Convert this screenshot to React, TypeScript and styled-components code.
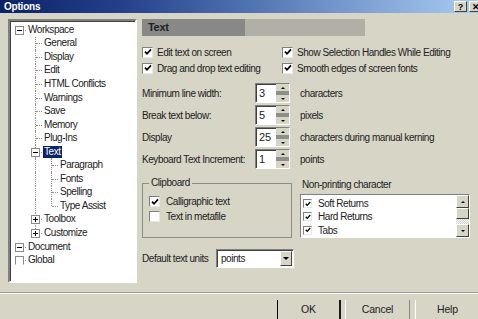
import styled, { createGlobalStyle } from "styled-components";

const FACE = "#d6d5c6";

const GlobalStyle = createGlobalStyle`
  html, body {
    margin: 0;
    padding: 0;
    background: ${FACE};
  }
`;

const Dialog = styled.div`
  width: 478px;
  height: 319px;
  overflow: hidden;
  background: ${FACE};
  display: flex;
  flex-direction: column;
  font-family: "Liberation Sans", Arial, sans-serif;
  font-size: 10px;
  letter-spacing: -0.45px;
  color: #222;
`;

const TitleBar = styled.div`
  height: 13px;
  flex: none;
  display: flex;
  justify-content: space-between;
  padding-left: 4px;
  background: linear-gradient(
    to right,
    #0c2266 0%,
    #24408a 25%,
    #4c6fae 50%,
    #7c9fd2 75%,
    #a8ccf2 100%
  );
`;

const TitleText = styled.span`
  color: #fff;
  font-weight: bold;
  font-size: 10px;
  letter-spacing: -0.2px;
  line-height: 13px;
`;

const TitleButtons = styled.div`
  display: flex;
  gap: 2px;
  margin: 1px -4px 0 0;
`;

const TitleButton = styled.div`
  width: 13px;
  height: 11px;
  box-sizing: border-box;
  background: ${FACE};
  border: 1px solid;
  border-color: #fff #404040 #404040 #fff;
  color: #000;
  font-weight: bold;
  font-size: 9px;
  letter-spacing: 0;
  display: flex;
  align-items: center;
  justify-content: center;
`;

const Main = styled.div`
  flex: none;
  height: 270px;
  box-sizing: border-box;
  display: flex;
  padding: 6px 0 0 8px;
`;

/* ---------- tree ---------- */

const Tree = styled.div`
  width: 129px;
  height: 264px;
  flex: none;
  box-sizing: border-box;
  background: #fff;
  border: 2px solid;
  border-color: #808080 #fff #fff #808080;
  box-shadow: inset 1px 1px #404040;
  padding: 2px 0 0 1px;
`;

const TreeRow = styled.div`
  height: 13.55px;
  display: flex;
  align-items: stretch;
`;

const Gutter = styled.span<{ $line: boolean }>`
  width: 16px;
  flex: none;
  position: relative;
  &::before {
    content: "";
    display: ${({ $line }) => ($line ? "block" : "none")};
    position: absolute;
    left: 8px;
    top: 0;
    bottom: 0;
    border-left: 1px dotted #909090;
  }
`;

const Joint = styled.span<{ $vline: "none" | "full" | "half" }>`
  width: 16px;
  flex: none;
  position: relative;
  &::before {
    content: "";
    display: ${({ $vline }) => ($vline === "none" ? "none" : "block")};
    position: absolute;
    left: 8px;
    top: 0;
    height: ${({ $vline }) => ($vline === "half" ? "50%" : "100%")};
    border-left: 1px dotted #909090;
  }
  &::after {
    content: "";
    position: absolute;
    left: 9px;
    right: 1px;
    top: 50%;
    border-top: 1px dotted #909090;
  }
`;

const ExpandBox = styled.span<{ $kind: "minus" | "plus" | "empty" }>`
  position: absolute;
  z-index: 1;
  left: 4px;
  top: calc(50% - 4px);
  width: 9px;
  height: 9px;
  box-sizing: border-box;
  background: #fff;
  border: 1px solid #8a8a8a;
  border-bottom-color: ${({ $kind }) => ($kind === "empty" ? "#fff" : "#8a8a8a")};
  &::before {
    content: "";
    display: ${({ $kind }) => ($kind === "empty" ? "none" : "block")};
    position: absolute;
    left: 1px;
    top: 3px;
    width: 5px;
    height: 1px;
    background: #000;
  }
  &::after {
    content: "";
    display: ${({ $kind }) => ($kind === "plus" ? "block" : "none")};
    position: absolute;
    left: 3px;
    top: 1px;
    width: 1px;
    height: 5px;
    background: #000;
  }
`;

const TreeLabel = styled.span<{ $selected?: boolean }>`
  align-self: center;
  padding: 0 1px;
  line-height: 12px;
  white-space: nowrap;
  background: ${({ $selected }) => ($selected ? "#0a246a" : "transparent")};
  color: ${({ $selected }) => ($selected ? "#fff" : "#222")};
`;

type Node = {
  label: string;
  level: number;
  box?: "minus" | "plus" | "empty";
  last?: boolean;
  selected?: boolean;
};

const nodes: Node[] = [
  { label: "Workspace", level: 0, box: "minus" },
  { label: "General", level: 1 },
  { label: "Display", level: 1 },
  { label: "Edit", level: 1 },
  { label: "HTML Conflicts", level: 1 },
  { label: "Warnings", level: 1 },
  { label: "Save", level: 1 },
  { label: "Memory", level: 1 },
  { label: "Plug-Ins", level: 1 },
  { label: "Text", level: 1, box: "minus", selected: true },
  { label: "Paragraph", level: 2 },
  { label: "Fonts", level: 2 },
  { label: "Spelling", level: 2 },
  { label: "Type Assist", level: 2, last: true },
  { label: "Toolbox", level: 1, box: "plus" },
  { label: "Customize", level: 1, box: "plus", last: true },
  { label: "Document", level: 0, box: "minus" },
  { label: "Global", level: 0, box: "empty" },
];

/* ---------- right side ---------- */

const Content = styled.div`
  margin-left: 5px;
  flex: 1;
  display: flex;
  flex-direction: column;
`;

const Header = styled.div`
  width: 223px;
  height: 17px;
  box-sizing: border-box;
  padding-left: 6px;
  background: linear-gradient(to right, #888887 0 103px, #b1b0a6 103px);
  font-size: 11px;
  font-weight: bold;
  letter-spacing: -0.3px;
  line-height: 17px;
`;

const CheckGrid = styled.div`
  display: grid;
  grid-template-columns: 140px auto;
  grid-auto-rows: 16px;
  margin-top: 8px;
`;

const CheckLine = styled.div<{ $gap?: number }>`
  display: flex;
  align-items: center;
  gap: ${({ $gap }) => $gap ?? 4}px;
  white-space: nowrap;
`;

const Box = styled.span<{ $size: number }>`
  width: ${({ $size }) => $size}px;
  height: ${({ $size }) => $size}px;
  flex: none;
  box-sizing: border-box;
  background: #fff;
  border: 1px solid;
  border-color: #808080 #e8e8e8 #e8e8e8 #808080;
  display: flex;
  align-items: center;
  justify-content: center;
`;

const Check = ({ size = 11, checked = true }: { size?: number; checked?: boolean }) => (
  <Box $size={size}>
    {checked && (
      <svg width={size - 3} height={size - 3} viewBox="0 0 8 8">
        <path d="M1 3.6 L3 5.8 L7 1.4" fill="none" stroke="#000" strokeWidth="1.7" />
      </svg>
    )}
  </Box>
);

const SpinList = styled.div`
  display: flex;
  flex-direction: column;
  gap: 2px;
  margin-top: 7px;
`;

const SpinRow = styled.div`
  height: 20px;
  display: flex;
  align-items: center;
`;

const SpinLabel = styled.span`
  width: 113px;
  flex: none;
  white-space: nowrap;
`;

const Spinner = styled.div`
  width: 35px;
  height: 20px;
  flex: none;
  box-sizing: border-box;
  display: flex;
  background: #fff;
  border: 1px solid;
  border-color: #808080 #fff #fff #808080;
  box-shadow: inset 1px 1px #404040;
`;

const SpinValue = styled.span`
  flex: 1;
  padding: 1px 0 0 3px;
  font-size: 11px;
  line-height: 17px;
  letter-spacing: 0;
`;

const SpinButtons = styled.div`
  width: 13px;
  flex: none;
  display: flex;
  flex-direction: column;
  justify-content: space-between;
  background: #8e8e8a;
`;

const SpinButton = styled.span`
  height: 7px;
  background: ${FACE};
  display: flex;
  align-items: center;
  justify-content: center;
`;

const Arrow = styled.span<{ $dir: "up" | "down"; $w?: number }>`
  width: 0;
  height: 0;
  border-left: ${({ $w }) => $w ?? 3}px solid transparent;
  border-right: ${({ $w }) => $w ?? 3}px solid transparent;
  ${({ $dir, $w }) =>
    $dir === "up"
      ? `border-bottom: ${$w ?? 3}px solid #000;`
      : `border-top: ${$w ?? 3}px solid #000;`}
`;

const Unit = styled.span`
  margin-left: 10px;
  white-space: nowrap;
`;

const GroupsRow = styled.div`
  display: flex;
  align-items: flex-start;
  margin-top: 8px;
`;

const Group = styled.fieldset`
  width: 150px;
  height: 61px;
  box-sizing: border-box;
  margin: 0;
  padding: 0 0 0 6px;
  border: 1px solid #8e8e88;
  display: flex;
  flex-direction: column;
`;

const GroupLegend = styled.legend`
  padding: 0 2px;
  line-height: 12px;
`;

const GroupItems = styled.div`
  margin-top: 5px;
  display: flex;
  flex-direction: column;
`;

const GroupItem = styled(CheckLine)`
  height: 15px;
`;

const ListColumn = styled.div`
  margin-left: 8px;
  width: 170px;
  display: flex;
  flex-direction: column;
`;

const ListCaption = styled.div`
  margin-top: 2px;
  padding-left: 2px;
  line-height: 12px;
  white-space: nowrap;
`;

const ListBox = styled.div`
  margin-top: 3px;
  height: 44px;
  box-sizing: border-box;
  display: flex;
  background: #fff;
  border: 1px solid;
  border-color: #808080 #fff #fff #808080;
`;

const ListItems = styled.div`
  flex: 1;
  padding: 2px 0 0 2px;
  display: flex;
  flex-direction: column;
`;

const ListItem = styled(CheckLine)`
  height: 13.5px;
`;

const ScrollBar = styled.div`
  width: 13px;
  flex: none;
  display: flex;
  flex-direction: column;
  background: repeating-conic-gradient(#fff 0 25%, #d0d0c8 0 50%) 0 0 / 2px 2px;
`;

const ScrollButton = styled.span`
  height: 13px;
  flex: none;
  box-sizing: border-box;
  background: ${FACE};
  border: 1px solid;
  border-color: #fff #404040 #404040 #fff;
  display: flex;
  align-items: center;
  justify-content: center;
`;

const Thumb = styled(ScrollButton)`
  height: 11px;
`;

const Track = styled.span`
  flex: 1;
`;

const UnitsRow = styled.div`
  height: 19px;
  margin-top: 11px;
  display: flex;
  align-items: center;
`;

const UnitsLabel = styled.span`
  width: 74px;
  flex: none;
  white-space: nowrap;
`;

const Combo = styled.div`
  width: 78px;
  height: 19px;
  box-sizing: border-box;
  display: flex;
  background: #fff;
  border: 1px solid;
  border-color: #808080 #fff #fff #808080;
  box-shadow: inset 1px 1px #404040;
  padding: 1px;
`;

const ComboText = styled.span`
  flex: 1;
  padding-left: 3px;
  line-height: 16px;
`;

const DropButton = styled.span`
  width: 12px;
  flex: none;
  box-sizing: border-box;
  background: ${FACE};
  border: 1px solid;
  border-color: #fff #404040 #404040 #fff;
  display: flex;
  align-items: center;
  justify-content: center;
`;

/* ---------- footer ---------- */

const Separator = styled.div`
  flex: none;
  margin-top: 9px;
  border-top: 1px solid #9c9c94;
  border-bottom: 1px solid #fff;
`;

const ButtonRow = styled.div`
  margin: 6px -2px 0 0;
  display: flex;
  justify-content: flex-end;
`;

const DialogButton = styled.div<{ $w: number; $default?: boolean; $gap: number }>`
  width: ${({ $w }) => $w}px;
  height: 24px;
  margin-left: ${({ $gap }) => $gap}px;
  box-sizing: border-box;
  border-left: 1px solid ${({ $default }) => ($default ? "#000" : "#fff")};
  border-right: ${({ $default }) => ($default ? "2px solid #1a1a1a" : "1px solid #8a8a84")};
  display: flex;
  justify-content: center;
  padding-top: 3px;
  font-size: 10.5px;
  letter-spacing: -0.2px;
`;

const spins = [
  { label: "Minimum line width:", value: "3", unit: "characters" },
  { label: "Break text below:", value: "5", unit: "pixels" },
  { label: "Display", value: "25", unit: "characters during manual kerning" },
  { label: "Keyboard Text Increment:", value: "1", unit: "points" },
];

export default function App() {
  return (
    <>
      <GlobalStyle />
      <Dialog>
        <TitleBar>
          <TitleText>Options</TitleText>
          <TitleButtons>
            <TitleButton>?</TitleButton>
            <TitleButton>✕</TitleButton>
          </TitleButtons>
        </TitleBar>

        <Main>
          <Tree>
            {nodes.map((n) => (
              <TreeRow key={n.label}>
                {n.level === 2 && <Gutter $line={false} />}
                {n.level === 2 && <Gutter $line />}
                {n.level === 1 && <Gutter $line={false} />}
                <Joint $vline={n.level === 0 ? "none" : n.last ? "half" : "full"}>
                  {n.box && <ExpandBox $kind={n.box} />}
                </Joint>
                <TreeLabel $selected={n.selected}>{n.label}</TreeLabel>
              </TreeRow>
            ))}
          </Tree>

          <Content>
            <Header>Text</Header>

            <CheckGrid>
              <CheckLine>
                <Check />
                Edit text on screen
              </CheckLine>
              <CheckLine>
                <Check />
                Show Selection Handles While Editing
              </CheckLine>
              <CheckLine>
                <Check />
                Drag and drop text editing
              </CheckLine>
              <CheckLine>
                <Check />
                Smooth edges of screen fonts
              </CheckLine>
            </CheckGrid>

            <SpinList>
              {spins.map((s) => (
                <SpinRow key={s.label}>
                  <SpinLabel>{s.label}</SpinLabel>
                  <Spinner>
                    <SpinValue>{s.value}</SpinValue>
                    <SpinButtons>
                      <SpinButton>
                        <Arrow $dir="up" $w={2.5} />
                      </SpinButton>
                      <SpinButton>
                        <Arrow $dir="down" $w={2.5} />
                      </SpinButton>
                    </SpinButtons>
                  </Spinner>
                  <Unit>{s.unit}</Unit>
                </SpinRow>
              ))}
            </SpinList>

            <GroupsRow>
              <Group>
                <GroupLegend>Clipboard</GroupLegend>
                <GroupItems>
                  <GroupItem $gap={6}>
                    <Check />
                    Calligraphic text
                  </GroupItem>
                  <GroupItem $gap={6}>
                    <Check checked={false} />
                    Text in metafile
                  </GroupItem>
                </GroupItems>
              </Group>

              <ListColumn>
                <ListCaption>Non-printing character</ListCaption>
                <ListBox>
                  <ListItems>
                    {["Soft Returns", "Hard Returns", "Tabs"].map((t) => (
                      <ListItem key={t} $gap={6}>
                        <Check size={9} />
                        {t}
                      </ListItem>
                    ))}
                  </ListItems>
                  <ScrollBar>
                    <ScrollButton>
                      <Arrow $dir="up" $w={2.5} />
                    </ScrollButton>
                    <Thumb />
                    <Track />
                    <ScrollButton>
                      <Arrow $dir="down" $w={2.5} />
                    </ScrollButton>
                  </ScrollBar>
                </ListBox>
              </ListColumn>
            </GroupsRow>

            <UnitsRow>
              <UnitsLabel>Default text units</UnitsLabel>
              <Combo>
                <ComboText>points</ComboText>
                <DropButton>
                  <Arrow $dir="down" $w={3} />
                </DropButton>
              </Combo>
            </UnitsRow>
          </Content>
        </Main>

        <Separator />
        <ButtonRow>
          <DialogButton $w={64} $gap={0} $default>
            OK
          </DialogButton>
          <DialogButton $w={65} $gap={4}>
            Cancel
          </DialogButton>
          <DialogButton $w={65} $gap={5}>
            Help
          </DialogButton>
        </ButtonRow>
      </Dialog>
    </>
  );
}
